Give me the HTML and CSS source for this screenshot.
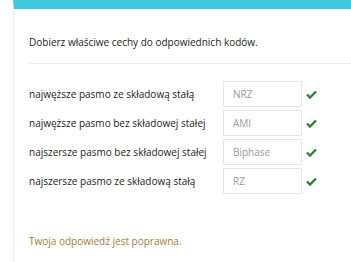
FILE: index.html
```html
<!DOCTYPE html>
<html>
	<head>
		<meta charset="UTF-8">
		<title>Pytanie</title>
		<link rel="stylesheet" href="styles.css">
	</head>
	<body>
		<div class="card">
			<div class="question">Dobierz właściwe cechy do odpowiednich kodów.</div>
			<div class="answers">
				<div class="row">
					<span class="label">najwęższe pasmo ze składową stałą</span>
					<span class="box">NRZ</span>
					<span class="tick"><svg width="11" height="9" viewBox="0 0 11 9"><path d="M1 4.5 L4 7.5 L10 1.5" fill="none" stroke="#2e7d32" stroke-width="2.4"/></svg></span>
				</div>
				<div class="row">
					<span class="label">najwęższe pasmo bez składowej stałej</span>
					<span class="box">AMI</span>
					<span class="tick"><svg width="11" height="9" viewBox="0 0 11 9"><path d="M1 4.5 L4 7.5 L10 1.5" fill="none" stroke="#2e7d32" stroke-width="2.4"/></svg></span>
				</div>
				<div class="row">
					<span class="label">najszersze pasmo bez składowej stałej</span>
					<span class="box">Biphase</span>
					<span class="tick"><svg width="11" height="9" viewBox="0 0 11 9"><path d="M1 4.5 L4 7.5 L10 1.5" fill="none" stroke="#2e7d32" stroke-width="2.4"/></svg></span>
				</div>
				<div class="row">
					<span class="label">najszersze pasmo ze składową stałą</span>
					<span class="box">RZ</span>
					<span class="tick"><svg width="11" height="9" viewBox="0 0 11 9"><path d="M1 4.5 L4 7.5 L10 1.5" fill="none" stroke="#2e7d32" stroke-width="2.4"/></svg></span>
				</div>
			</div>
			<div class="feedback">Twoja odpowiedź jest poprawna.</div>
		</div>
	</body>
</html>
```

FILE: styles.css
```css
* {
	margin: 0;
	padding: 0;
	box-sizing: border-box;
}
body {
	background: #fff;
	font-family: "Open Sans", "Noto Sans", sans-serif;
	font-size: 10px;
	color: #222;
}
.card {
	margin-left: 13px;
	height: 262px;
	border-left: 1px solid #eeeeee;
	border-top: 9px solid #40c9da;
}
.question {
	margin-left: 15px;
	padding: 25px 0 13px;
	line-height: 16px;
	border-bottom: 1px solid #ececec;
}
.answers {
	margin-left: 15px;
	padding-top: 17px;
	display: flex;
	flex-direction: column;
	gap: 3px;
}
.row {
	display: flex;
	align-items: center;
	height: 26px;
}
.label {
	width: 194px;
	white-space: nowrap;
}
.box {
	width: 79px;
	height: 26px;
	border: 1px solid #e6e6e6;
	padding-left: 9px;
	line-height: 24px;
	color: #999;
}
.tick {
	margin-left: 4px;
	display: flex;
}
.feedback {
	margin-left: 15px;
	margin-top: 40px;
	color: #a37a3e;
}
```
